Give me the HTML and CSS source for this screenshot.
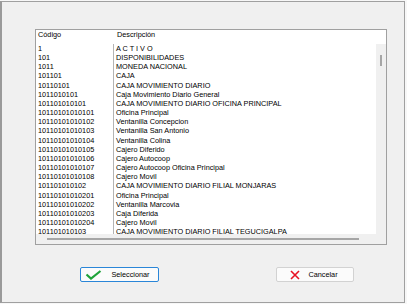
FILE: index.html
```html
<!DOCTYPE html>
<html lang="es">
  <head>
    <meta charset="UTF-8" />
    <title>Plan de Cuentas</title>
    <link rel="stylesheet" href="styles.css">
  </head>
  <body>
    <div class="window">
      <div class="listbox">
        <div class="list-header">
          <span class="col-code">Código</span>
          <span class="col-desc">Descripción</span>
        </div>
        <div class="list-body">
          <div class="rows">
            <div class="row"><span class="col-code">1</span><span class="col-desc">A C T I V O</span></div>
            <div class="row"><span class="col-code">101</span><span class="col-desc">DISPONIBILIDADES</span></div>
            <div class="row"><span class="col-code">1011</span><span class="col-desc">MONEDA NACIONAL</span></div>
            <div class="row"><span class="col-code">101101</span><span class="col-desc">CAJA</span></div>
            <div class="row"><span class="col-code">10110101</span><span class="col-desc">CAJA MOVIMIENTO DIARIO</span></div>
            <div class="row"><span class="col-code">1011010101</span><span class="col-desc">Caja Movimiento Diario General</span></div>
            <div class="row"><span class="col-code">101101010101</span><span class="col-desc">CAJA MOVIMIENTO DIARIO OFICINA PRINCIPAL</span></div>
            <div class="row"><span class="col-code">10110101010101</span><span class="col-desc">Oficina Principal</span></div>
            <div class="row"><span class="col-code">10110101010102</span><span class="col-desc">Ventanilla Concepcion</span></div>
            <div class="row"><span class="col-code">10110101010103</span><span class="col-desc">Ventanilla San Antonio</span></div>
            <div class="row"><span class="col-code">10110101010104</span><span class="col-desc">Ventanilla Colina</span></div>
            <div class="row"><span class="col-code">10110101010105</span><span class="col-desc">Cajero Diferido</span></div>
            <div class="row"><span class="col-code">10110101010106</span><span class="col-desc">Cajero Autocoop</span></div>
            <div class="row"><span class="col-code">10110101010107</span><span class="col-desc">Cajero Autocoop Oficina Principal</span></div>
            <div class="row"><span class="col-code">10110101010108</span><span class="col-desc">Cajero Movil</span></div>
            <div class="row"><span class="col-code">101101010102</span><span class="col-desc">CAJA MOVIMIENTO DIARIO FILIAL MONJARAS</span></div>
            <div class="row"><span class="col-code">10110101010201</span><span class="col-desc">Oficina Principal</span></div>
            <div class="row"><span class="col-code">10110101010202</span><span class="col-desc">Ventanilla Marcovia</span></div>
            <div class="row"><span class="col-code">10110101010203</span><span class="col-desc">Caja Diferida</span></div>
            <div class="row"><span class="col-code">10110101010204</span><span class="col-desc">Cajero Movil</span></div>
            <div class="row"><span class="col-code">101101010103</span><span class="col-desc">CAJA MOVIMIENTO DIARIO FILIAL TEGUCIGALPA</span></div>
          </div>
          <div class="vscroll"><div class="vthumb"></div></div>
        </div>
        <div class="hscroll"><div class="hthumb"></div></div>
      </div>

      <div class="buttons">
        <button class="btn btn-default">
          <svg width="17" height="10" viewBox="0 0 17 10">
            <path d="M1.5 4.5 L6 8.6 L15.5 1" fill="none" stroke="#1fa33a" stroke-width="2.2" />
          </svg>
          Seleccionar
        </button>
        <button class="btn btn-cancel">
          <svg width="10" height="10" viewBox="0 0 10 10">
            <path d="M1 1 L9 9 M9 1 L1 9" fill="none" stroke="#e81123" stroke-width="1.6" />
          </svg>
          Cancelar
        </button>
      </div>
    </div>
  </body>
</html>
```

FILE: styles.css
```css
body {
  margin: 0;
  background-color: #f7f7f7;
  font-family: "Liberation Sans", Arial, sans-serif;
  font-size: 7.3px;
  color: #000;
}
.window {
  box-sizing: border-box;
  width: 405px;
  height: 302px;
  margin-top: 1px;
  padding: 27px 0 0 33px;
  background-color: #f0f0f0;
  border: 1px solid #a0a0a0;
  border-left: 2px solid #9a9a9a;
}
.listbox {
  width: 352px;
  height: 216px;
  box-sizing: border-box;
  border: 1px solid #a0a0a0;
  display: flex;
  flex-direction: column;
  background: white;
}
.list-header {
  height: 14px;
  display: flex;
  line-height: 9.17px;
}
.list-header .col-code {
  width: 78px;
  padding-left: 2px;
  box-sizing: border-box;
}
.list-header .col-desc {
  padding-left: 3px;
}
.list-body {
  height: 190px;
  display: flex;
}
.rows {
  flex: 1;
  overflow: hidden;
}
.row {
  display: grid;
  grid-template-columns: 77px 1fr;
  line-height: 9.17px;
  height: 9.17px;
  white-space: nowrap;
}
.row .col-code {
  padding-left: 2px;
}
.row .col-desc {
  border-left: 1px solid #b4b4b4;
  padding-left: 2px;
}
.vscroll {
  width: 10px;
  background-color: #f0f0f0;
  position: relative;
}
.vthumb {
  position: absolute;
  left: 4px;
  top: 11px;
  width: 2px;
  height: 11px;
  background-color: #a6a6a6;
}
.hscroll {
  height: 10px;
  background-color: #f0f0f0;
  position: relative;
}
.hthumb {
  position: absolute;
  left: 11px;
  top: 4px;
  width: 312px;
  height: 2px;
  background-color: #a6a6a6;
}
.buttons {
  display: flex;
  gap: 117px;
  margin-top: 22px;
  padding-left: 45px;
}
.btn {
  box-sizing: border-box;
  height: 15px;
  padding: 0;
  display: flex;
  align-items: center;
  justify-content: center;
  gap: 10px;
  font-family: "Liberation Sans", Arial, sans-serif;
  font-size: 7.3px;
  color: #000;
  background-color: #fbfbfb;
  border-radius: 2px;
}
.btn-default {
  width: 79px;
  border: 1px solid #2a86d8;
  gap: 9px;
  padding-right: 4px;
}
.btn-cancel {
  width: 78px;
  border: 1px solid #d2d2d2;
  gap: 8px;
  padding-right: 2px;
}
```
